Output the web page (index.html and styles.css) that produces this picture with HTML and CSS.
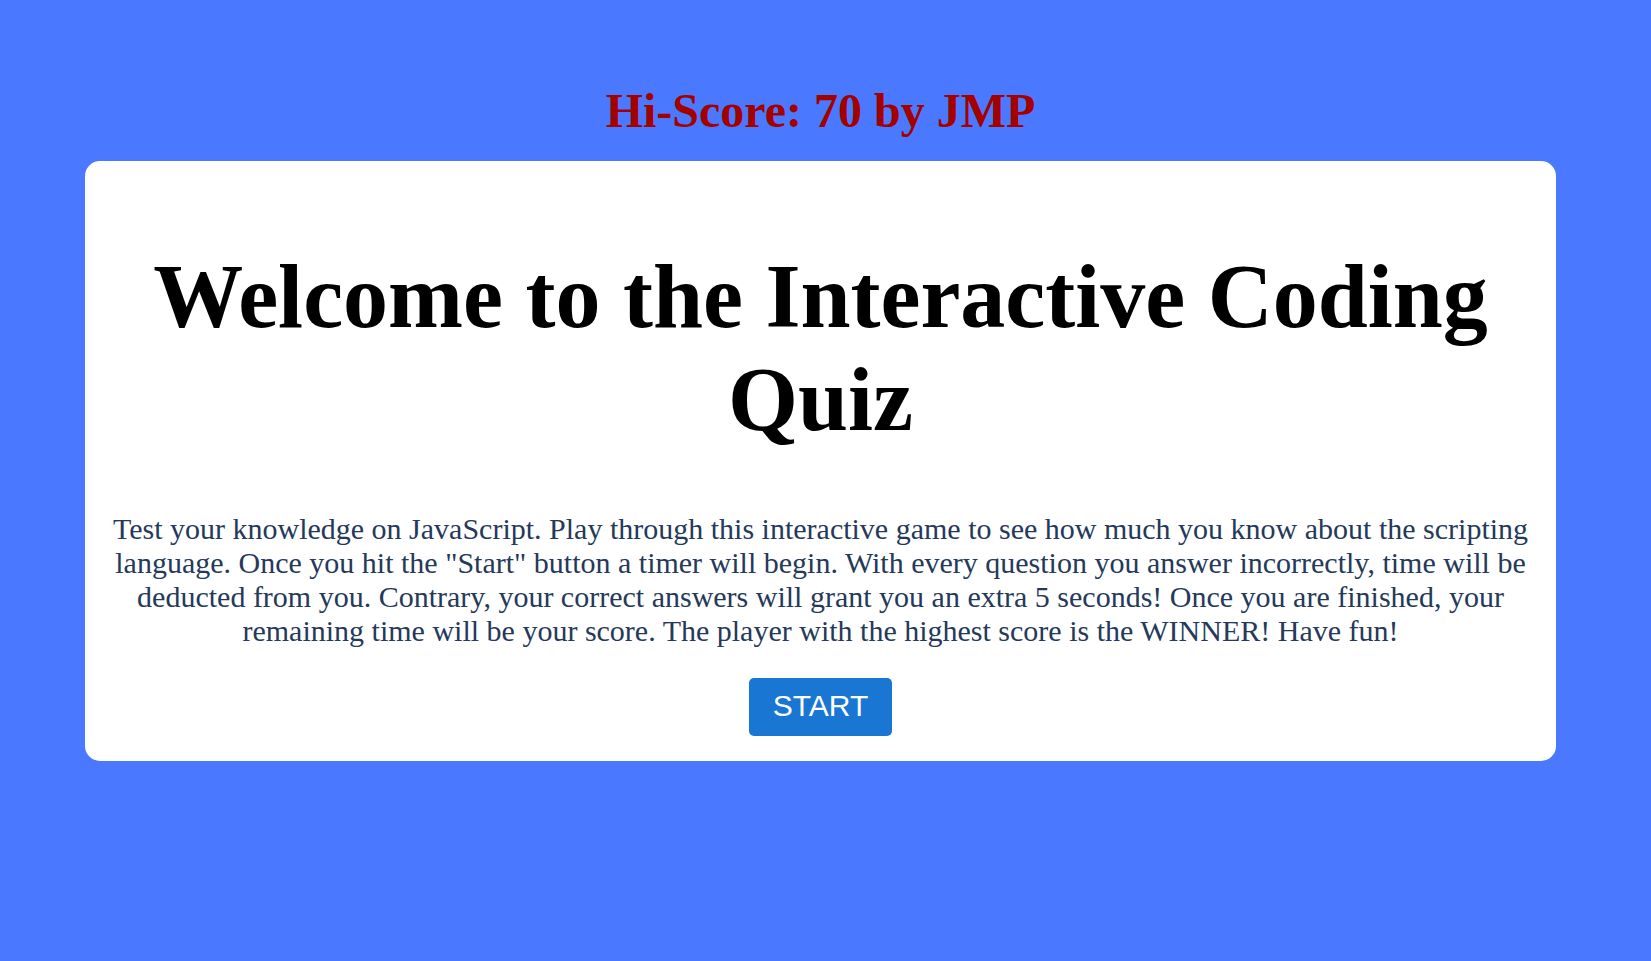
FILE: index.html
```html
<!DOCTYPE html>
<html lang="en">
<head>
<meta charset="utf-8">
<title>Coding Quiz</title>
<link rel="stylesheet" href="styles.css">
</head>
<body>
<div class="page">
  <h2 class="hiscore">Hi-Score: 70 by JMP</h2>
  <main class="card">
    <h1 class="title">Welcome to the Interactive Coding Quiz</h1>
    <p class="intro">Test your knowledge on JavaScript. Play through this interactive game to see how much you know about the scripting language. Once you hit the "Start" button a timer will begin. With every question you answer incorrectly, time will be deducted from you. Contrary, your correct answers will grant you an extra 5 seconds! Once you are finished, your remaining time will be your score. The player with the highest score is the WINNER! Have fun!</p>
    <div class="actions">
      <button class="start" type="button">START</button>
    </div>
  </main>
</div>
</body>
</html>
```
FILE: styles.css
```css
html, body {
  margin: 0;
  padding: 0;
}
body {
  background: #4a79ff;
  font-family: "Liberation Serif", "Times New Roman", serif;
  min-height: 961px;
}
.page {
  padding: 0 95px 0 85px;
}
.hiscore {
  margin: 0;
  padding: 83px 0 23px;
  text-align: center;
  font-size: 48px;
  font-weight: bold;
  color: #a30000;
  line-height: normal;
}
.card {
  display: block;
  background: #ffffff;
  border-radius: 15px;
  padding: 25px 25px 25px;
  text-align: center;
}
.title {
  margin: 59px 0 61px;
  font-size: 90px;
  font-weight: bold;
  color: #000000;
  line-height: normal;
}
.intro {
  margin: 0 0 30px;
  font-size: 30px;
  line-height: 34px;
  color: #25395a;
}
.actions {
  display: flex;
  justify-content: center;
}
.start {
  font-family: "Liberation Sans", Arial, sans-serif;
  font-size: 30px;
  line-height: normal;
  color: #ffffff;
  background: #1976d2;
  border: none;
  border-radius: 5px;
  padding: 11px 24px 13px;
  cursor: pointer;
}
```
